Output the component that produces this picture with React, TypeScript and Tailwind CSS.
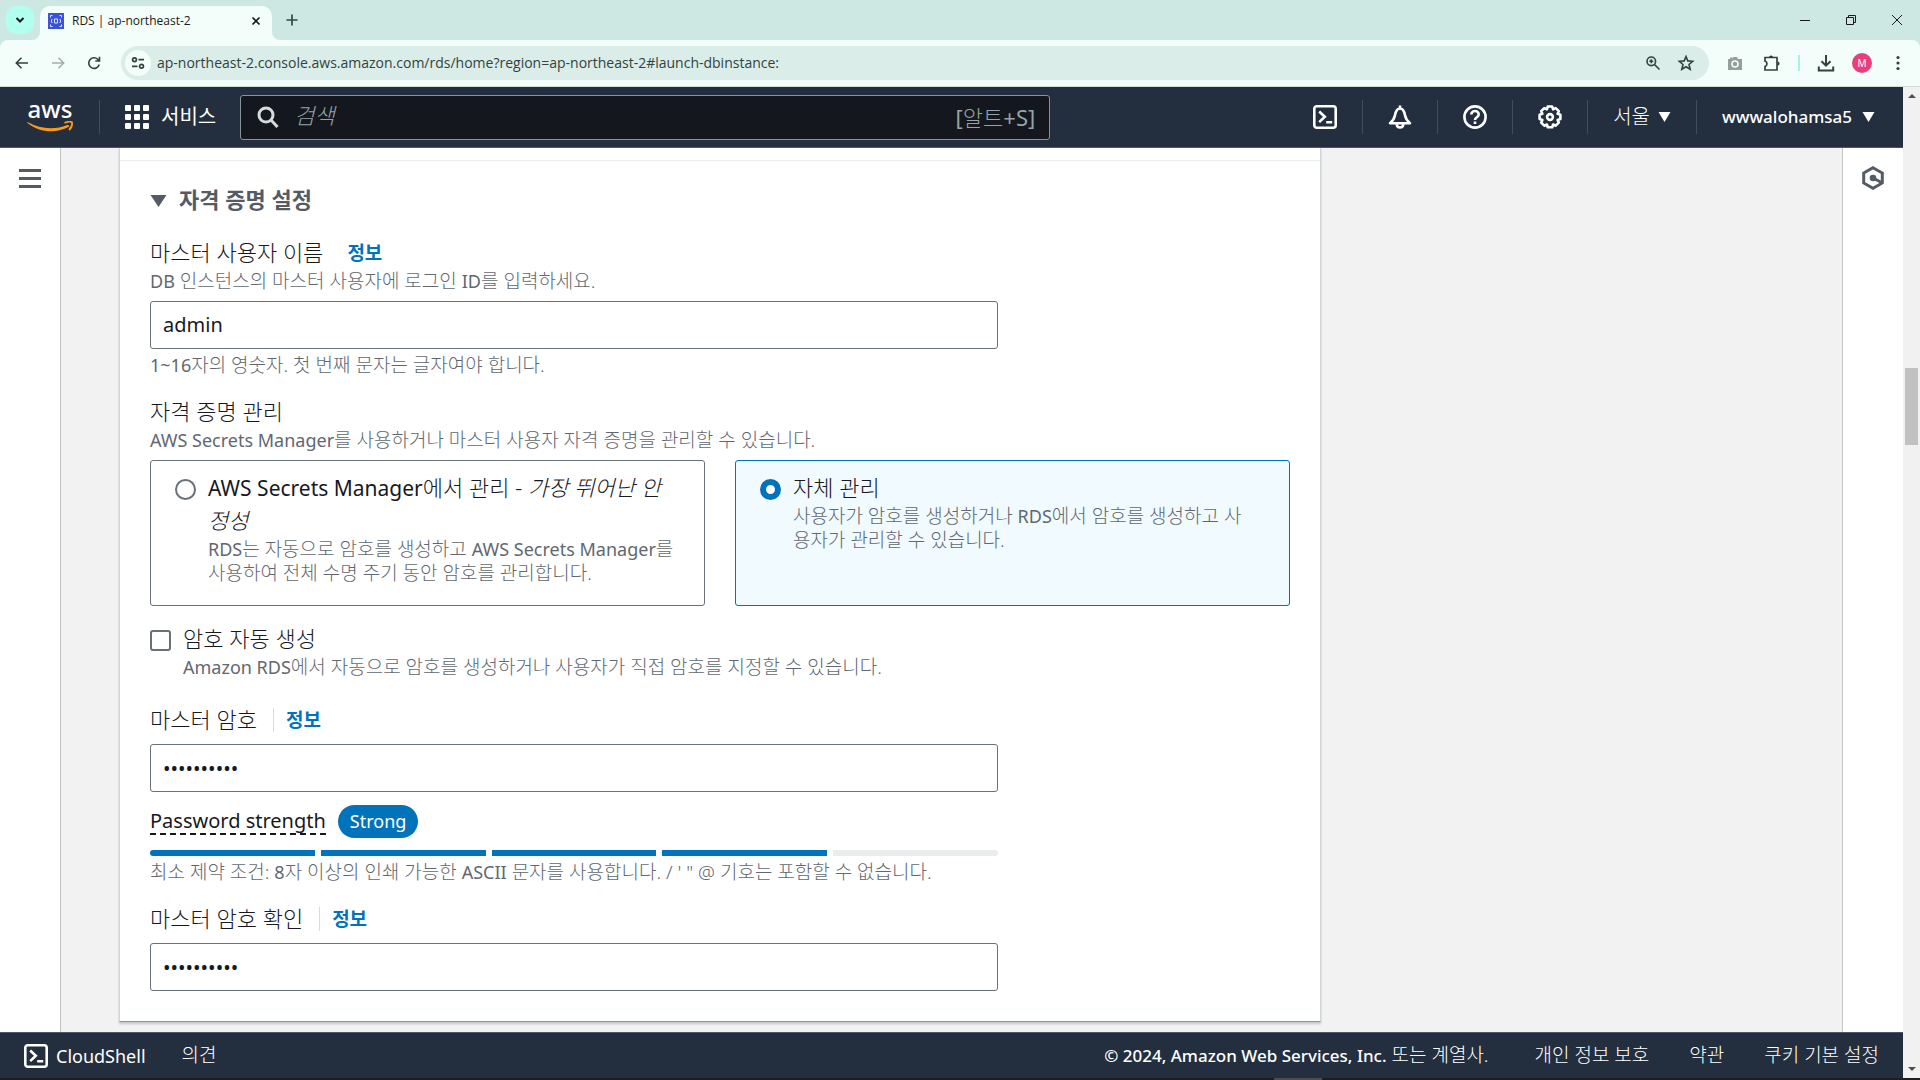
import React from "react";

const FONT = "font-['Noto_Sans','Noto_Sans_CJK_KR',sans-serif]";

function CloudShellIcon() {
  return (
    <svg className="size-6" viewBox="0 0 24 24" fill="none" stroke="currentColor" strokeWidth="2.6" aria-hidden="true">
      <rect x="1.3" y="1.3" width="21.4" height="21.4" rx="2.5" />
      <path d="M6.2 6.5l5.6 5.3-5.6 5.3M13.2 17.2h6" />
    </svg>
  );
}

function Caret() {
  return (
    <svg className="h-3 w-[13px]" viewBox="0 0 13 12" fill="currentColor" aria-hidden="true">
      <path d="M0.5 1h12L6.5 11z" />
    </svg>
  );
}

function TabStrip() {
  return (
    <div className="flex h-10 items-start bg-[#cde8e2] text-[#1b1b1b]">
      <button aria-label="탭 검색" className="mt-1.5 ml-1.5 grid size-7 place-items-center rounded-[10px] bg-[#b2fff0]">
        <svg className="size-3" viewBox="0 0 12 12" fill="none" stroke="currentColor" strokeWidth="2">
          <path d="M2.5 4l3.5 3.5L9.5 4" />
        </svg>
      </button>
      <div className="relative mt-1.5 ml-1.5 flex h-[34px] w-[232px] items-center rounded-t-[10px] bg-[#f3fdfa] pr-2 pb-1 pl-2">
        <svg className="absolute bottom-0 -left-2 size-2 text-[#f3fdfa]" viewBox="0 0 8 8" fill="currentColor" aria-hidden="true">
          <path d="M8 0v8H0a8 8 0 0 0 8-8z" />
        </svg>
        <svg className="absolute -right-2 bottom-0 size-2 text-[#f3fdfa]" viewBox="0 0 8 8" fill="currentColor" aria-hidden="true">
          <path d="M0 0v8h8a8 8 0 0 1-8-8z" />
        </svg>
        <svg className="size-4 shrink-0" viewBox="0 0 16 16" aria-hidden="true">
          <rect width="16" height="16" fill="#3b53d6" />
          <g fill="none" stroke="#dfe4ff" strokeWidth="1">
            <path d="M2.500 4.500v-2h2M11.500 2.500h2v2M13.500 11.500v2h-2M4.500 13.500h-2v-2" />
            <path d="M4.300 6C3 7.300 3 8.700 4.300 10M11.700 6c1.300 1.300 1.300 2.700 0 4" />
            <path d="M6.500 6h3v4h-3z" />
          </g>
        </svg>
        <span className="ml-2 flex-1 font-['Open_Sans',sans-serif] text-xs">RDS | ap-northeast-2</span>
        <button aria-label="탭 닫기" className="grid size-4 place-items-center">
          <svg className="size-2.5" viewBox="0 0 10 10" stroke="currentColor" strokeWidth="1.7">
            <path d="M1.500 1.500l7 7M8.500 1.500l-7 7" />
          </svg>
        </button>
      </div>
      <button aria-label="새 탭" className="mt-3 ml-3 grid size-4 place-items-center text-[#2f4a45]">
        <svg className="size-3" viewBox="0 0 12 12" stroke="currentColor" strokeWidth="1.700">
          <path d="M6 0.500v11M0.500 6h11" />
        </svg>
      </button>
      <div className="ml-auto flex h-10 items-center">
        <button aria-label="최소화" className="grid w-[46px] place-items-center">
          <svg className="h-3 w-2.5" viewBox="0 0 10 12" stroke="currentColor">
            <path d="M0 6.500h10" />
          </svg>
        </button>
        <button aria-label="이전 크기로 복원" className="grid w-[46px] place-items-center">
          <svg className="size-2.5" viewBox="0 0 10 10" fill="none" stroke="currentColor">
            <path d="M0.500 2.500h7v7h-7zM2.500 2.500v-2h7v7h-2" />
          </svg>
        </button>
        <button aria-label="닫기" className="grid w-[46px] place-items-center">
          <svg className="size-2.5" viewBox="0 0 10 10" stroke="currentColor">
            <path d="M0 0l10 10M10 0L0 10" />
          </svg>
        </button>
      </div>
    </div>
  );
}

function Toolbar() {
  return (
    <div className="bg-[#cde8e2]">
      <div className="flex h-[47px] items-center rounded-t-lg border-b border-[#cfdedb] bg-[#f3fdfa] text-[#31433f]">
        <div className="flex items-center gap-[18px] pl-[13px]">
          <button aria-label="뒤로">
            <svg className="size-[18px]" viewBox="0 0 18 18" fill="none" stroke="currentColor" strokeWidth="1.600">
              <path d="M15 9H3.500M8.500 3.800L3.300 9l5.200 5.200" />
            </svg>
          </button>
          <button aria-label="앞으로" className="text-[#a3b0ad]">
            <svg className="size-[18px]" viewBox="0 0 18 18" fill="none" stroke="currentColor" strokeWidth="1.600">
              <path d="M3 9h11.500M9.500 3.800L14.700 9l-5.200 5.200" />
            </svg>
          </button>
          <button aria-label="새로고침">
            <svg className="size-[18px]" viewBox="0 0 18 18" fill="none" stroke="currentColor" strokeWidth="1.600">
              <path d="M14.200 10.500A5.300 5.300 0 1 1 12.800 5.300L14.300 6.800M14.500 2.800V7H10.300" />
            </svg>
          </button>
        </div>
        <div className="ml-[18px] flex h-[34px] flex-1 items-center rounded-full bg-[#dbede8] pr-3.5 pl-1">
          <button aria-label="사이트 정보 보기" className="grid size-[26px] place-items-center rounded-full bg-[#f3fdfa]">
            <svg className="size-3.5" viewBox="0 0 14 14" fill="none" stroke="currentColor" strokeWidth="1.700">
              <circle cx="3.500" cy="3.700" r="1.900" />
              <circle cx="10.500" cy="10.300" r="1.900" />
              <path d="M7.500 3.700H13M1 10.300h5.500" />
            </svg>
          </button>
          <input
            aria-label="주소창"
            className="ml-1.5 min-w-0 flex-1 bg-transparent font-['Open_Sans',sans-serif] text-sm outline-none"
            defaultValue="ap-northeast-2.console.aws.amazon.com/rds/home?region=ap-northeast-2#launch-dbinstance:"
          />
          <button aria-label="확대/축소">
            <svg className="size-4" viewBox="0 0 16 16" fill="none" stroke="currentColor" strokeWidth="1.600">
              <circle cx="6.300" cy="6.300" r="4.300" />
              <path d="M9.500 9.500L14.500 14.500M6.300 4.300v4M4.300 6.300h4" />
            </svg>
          </button>
          <button aria-label="북마크에 추가" className="ml-4">
            <svg className="size-[18px]" viewBox="0 0 18 18" fill="none" stroke="currentColor" strokeWidth="1.600">
              <path d="M9 2.500l1.800 4.400 4.900.4-3.700 3.200 1.200 4.800L9 12.800l-4.200 2.500L6 10.500 2.300 7.300l4.900-.4z" />
            </svg>
          </button>
        </div>
        <div className="flex items-center pr-3 pl-[18px]">
          <button aria-label="화면 캡처" className="text-[#94a09e]">
            <svg className="size-4" viewBox="0 0 16 16" aria-hidden="true">
              <path fill="currentColor" d="M1 4h2V2.500h2V4l1-2h4l1 2h4v11H1z" />
              <circle cx="8" cy="9" r="3" fill="none" stroke="#f3fdfa" strokeWidth="1.600" />
            </svg>
          </button>
          <button aria-label="확장 프로그램" className="ml-5">
            <svg className="size-[18px]" viewBox="0 0 18 18" fill="none" stroke="currentColor" strokeWidth="1.700">
              <path d="M2 3.500h12v12.500H2V12.500c2.600-.8 2.600-4.700 0-5.500z" />
              <path fill="currentColor" stroke="none" d="M6 3.500a2.100 2.100 0 0 1 4.200 0zM14.500 7.500a2.100 2.100 0 0 1 0 4.200z" />
            </svg>
          </button>
          <span className="ml-[17px] h-4 w-0.5 bg-[#a5f2e6]" />
          <button aria-label="다운로드" className="ml-[17px]">
            <svg className="size-[18px]" viewBox="0 0 18 18" fill="none" stroke="currentColor" strokeWidth="2">
              <path d="M9 1v10.500M4.500 7.200L9 11.700l4.500-4.500M1.800 12.500V16.500h14.400v-4" />
            </svg>
          </button>
          <button aria-label="프로필" className="ml-[17px] grid size-5 place-items-center rounded-full bg-[#e93e7c] text-[10px] text-white">
            M
          </button>
          <button aria-label="Chrome 맞춤설정" className="ml-4">
            <svg className="size-5" viewBox="0 0 20 20" fill="currentColor">
              <circle cx="10" cy="4.500" r="1.600" />
              <circle cx="10" cy="10" r="1.600" />
              <circle cx="10" cy="15.500" r="1.600" />
            </svg>
          </button>
        </div>
      </div>
    </div>
  );
}

function HeaderRule() {
  return <span className="h-[34px] w-px shrink-0 bg-[#414d5c]" />;
}

function AwsHeader() {
  return (
    <header className="flex h-[61px] shrink-0 items-center border-b border-[#4b5563] bg-[#232f3e] text-white">
      <a href="#home" aria-label="AWS" className="ml-[26px] flex w-12 shrink-0 flex-col items-center">
        <span className="h-5 text-2xl leading-4 font-medium">aws</span>
        <svg className="h-3 w-12" viewBox="0 0 48 12" aria-hidden="true">
          <path d="M1 1.500C14 12.500 31 12.500 43.500 5.500l-1.500-1.800C29 9 15 8.500 1.500 1z" fill="#f79a1e" />
          <path d="M38.500 2c3-1.500 6-1.600 7.500-.7.400 2.500-.6 5.500-3 7.700" fill="none" stroke="#f79a1e" strokeWidth="1.800" />
        </svg>
      </a>
      <div className="ml-[25px] flex shrink-0 items-center gap-[25px]">
        <HeaderRule />
        <button className="flex items-center gap-3 text-xl">
          <svg className="size-6" viewBox="0 0 24 24" fill="currentColor" aria-hidden="true">
            <rect width="6" height="6" rx="1" />
            <rect x="9" width="6" height="6" rx="1" />
            <rect x="18" width="6" height="6" rx="1" />
            <rect y="9" width="6" height="6" rx="1" />
            <rect x="9" y="9" width="6" height="6" rx="1" />
            <rect x="18" y="9" width="6" height="6" rx="1" />
            <rect y="18" width="6" height="6" rx="1" />
            <rect x="9" y="18" width="6" height="6" rx="1" />
            <rect x="18" y="18" width="6" height="6" rx="1" />
          </svg>
          서비스
        </button>
      </div>
      <div className="ml-6 flex h-[45px] w-full max-w-[810px] items-center rounded-[3px] border border-[#879596] bg-[#14171d] pr-3.5 pl-4">
        <svg className="size-[22px] shrink-0 text-[#d5dbdb]" viewBox="0 0 22 22" fill="none" stroke="currentColor" strokeWidth="3" aria-hidden="true">
          <circle cx="9" cy="9" r="7" />
          <path d="M14 14l6.500 7" />
        </svg>
        <input aria-label="검색" placeholder="검색" className="ml-[15px] min-w-0 flex-1 bg-transparent pb-[3px] text-[22px] font-light italic outline-none placeholder:text-[#95a5a6]" />
        <span className="text-[22px] text-[#95a5a6]">[<span className="font-light">알트</span>+S]</span>
      </div>
      <nav className="ml-auto flex shrink-0 items-center gap-[25px] pr-7">
        <button aria-label="CloudShell"><CloudShellIcon /></button>
        <HeaderRule />
        <button aria-label="알림">
          <svg className="size-6" viewBox="0 0 24 24" fill="none" stroke="currentColor" strokeWidth="2.600" aria-hidden="true">
            <path strokeLinejoin="round" d="M2 18.200h20c-3-2.500-4.300-4.500-5-8-.7-3.800-2-6.700-5-6.700s-4.300 2.900-5 6.700c-.7 3.500-2 5.500-5 8zM12 0.500v3M8.800 18.500v.8c0 4.200 6.400 4.200 6.400 0v-.8" />
          </svg>
        </button>
        <HeaderRule />
        <button aria-label="도움말">
          <svg className="size-6" viewBox="0 0 24 24" fill="none" stroke="currentColor" strokeWidth="2.600" aria-hidden="true">
            <circle cx="12" cy="12" r="10.600" />
            <path d="M8.300 9.600c0-4.800 7.400-4.800 7.400 0 0 2.800-3.700 2.600-3.700 5.400M12 16.500v2.600" />
          </svg>
        </button>
        <HeaderRule />
        <button aria-label="설정">
          <svg className="size-6" viewBox="0 0 24 24" fill="none" stroke="currentColor" strokeWidth="2.600" aria-hidden="true">
            <path strokeLinejoin="round" d="M9.800 1.500h4.400l.9 2.800 2.600-1.200 3.100 3.100-1.200 2.600 2.800.9v4.400l-2.800.9 1.200 2.600-3.100 3.100-2.600-1.200-.9 2.800H9.800l-.9-2.800-2.600 1.200-3.100-3.100 1.200-2.600-2.800-.9V9.700l2.800-.9-1.200-2.600 3.100-3.100 2.600 1.200z" />
            <circle cx="12" cy="12" r="2.900" />
          </svg>
        </button>
        <HeaderRule />
        <button className="flex items-center gap-2 text-xl font-light">서울 <Caret /></button>
        <HeaderRule />
        <button className="flex items-center gap-2.5 text-[17px] font-medium">wwwalohamsa5 <Caret /></button>
      </nav>
    </header>
  );
}

function InfoLink() {
  return <a href="#info" className="text-[19px] leading-6 font-bold text-[#0073bb]">정보</a>;
}

/* Hangul is set light and slightly larger than the Latin words beside it. */
function Mixed({ text, latin }: { text: string; latin: string }) {
  return (
    <>
      {text.split(/([A-Za-z0-9~]+(?: [A-Za-z0-9]+)*)/).map((run, i) =>
        i % 2 ? <span key={i} className={latin}>{run}</span> : run
      )}
    </>
  );
}

function Hint({ text }: { text: string }) {
  return (
    <span className="block text-[19px] leading-6 font-light text-[#5f6870]">
      <Mixed text={text} latin="text-lg leading-none font-normal" />
    </span>
  );
}

const LABEL = "text-[22px] leading-[33px] font-light text-[#16191f]";
const FIELD = "mt-2 h-12 w-full max-w-[848px] rounded-[3px] border border-[#687078] bg-white px-3 text-xl text-[#16191f] outline-none";

function CredentialsPanel() {
  return (
    <section className="w-full max-w-[1202px] border-x border-b border-x-[#cfd4d4] border-b-[#8e9494] bg-white shadow-[0_2px_2px_rgba(0,28,36,0.2)]">
      <div className="h-[13px] border-b border-[#eaeded]" />
      <div className="px-[30px] pt-[22px] pb-[30px]">
        <button aria-expanded="true" className="flex items-center gap-3 text-[22px] leading-[33px] font-bold text-[#545b64]">
          <svg className="mt-0.5 h-3 w-[17px]" viewBox="0 0 17 12" fill="currentColor" aria-hidden="true"><path d="M0.500 0h16L8.500 12z" /></svg>
          자격 증명 설정
        </button>

        <div className="mt-5 flex items-center gap-6">
          <label htmlFor="master-user" className={LABEL}>마스터 사용자 이름</label>
          <InfoLink />
        </div>
        <Hint text="DB 인스턴스의 마스터 사용자에 로그인 ID를 입력하세요." />
        <input id="master-user" className={FIELD + " pb-0.5"} defaultValue="admin" />
        <div className="mt-1"><Hint text="1~16자의 영숫자. 첫 번째 문자는 글자여야 합니다." /></div>

        <fieldset className="mt-[18px]">
          <legend className={LABEL}>자격 증명 관리</legend>
          <Hint text="AWS Secrets Manager를 사용하거나 마스터 사용자 자격 증명을 관리할 수 있습니다." />
          <div className="mt-2 grid grid-cols-2 gap-[30px]">
            <label className="flex items-start gap-3 rounded-[3px] border border-[#687078] pt-2.5 pr-7 pb-5 pl-6">
              <input type="radio" name="management" className="mt-2 size-[21px] shrink-0 appearance-none rounded-full border-2 border-[#687078] bg-white" />
              <span>
                <span className={"block " + LABEL}><span className="text-[21px] leading-none font-normal">AWS Secrets Manager</span>에서 관리 - <i>가장 뛰어난 안정성</i></span>
                <Hint text="RDS는 자동으로 암호를 생성하고 AWS Secrets Manager를 사용하여 전체 수명 주기 동안 암호를 관리합니다." />
              </span>
            </label>
            <label className="flex items-start gap-3 rounded-[3px] border border-[#0073bb] bg-[#f1faff] pt-2.5 pr-10 pb-5 pl-6">
              <input type="radio" name="management" defaultChecked className="mt-2 size-[21px] shrink-0 appearance-none rounded-full border-[6px] border-[#0073bb] bg-white" />
              <span>
                <span className={"block " + LABEL}>자체 관리</span>
                <Hint text="사용자가 암호를 생성하거나 RDS에서 암호를 생성하고 사용자가 관리할 수 있습니다." />
              </span>
            </label>
          </div>
        </fieldset>

        <label className="mt-4 flex items-start gap-3">
          <input type="checkbox" className="mt-2 size-[21px] shrink-0 appearance-none rounded-[3px] border-2 border-[#687078] bg-white" />
          <span>
            <span className={"block " + LABEL}>암호 자동 생성</span>
            <Hint text="Amazon RDS에서 자동으로 암호를 생성하거나 사용자가 직접 암호를 지정할 수 있습니다." />
          </span>
        </label>

        <div className="mt-6 flex items-center gap-3">
          <label htmlFor="master-password" className={LABEL}>마스터 암호</label>
          <span className="ml-1 h-6 w-px bg-[#d5dbdb]" />
          <InfoLink />
        </div>
        <input id="master-password" type="password" className={FIELD} defaultValue="password12" />
        <div className="mt-[13px] flex items-center gap-3">
          <span className="border-b-2 border-dashed border-[#16191f] text-xl leading-6 text-[#16191f]">Password strength</span>
          <span className="rounded-full bg-[#0073bb] px-3 text-lg leading-[33px] text-white">Strong</span>
        </div>
        <div className="mt-3 grid max-w-[848px] grid-cols-5 gap-1.5">
          <span className="h-1.5 rounded-l-full bg-[#0073bb]" />
          <span className="h-1.5 bg-[#0073bb]" />
          <span className="h-1.5 bg-[#0073bb]" />
          <span className="h-1.5 bg-[#0073bb]" />
          <span className="h-1.5 rounded-r-full bg-[#eaeded]" />
        </div>
        <div className="mt-1"><Hint text={"최소 제약 조건: 8자 이상의 인쇄 가능한 ASCII 문자를 사용합니다. / ' \" @ 기호는 포함할 수 없습니다."} /></div>

        <div className="mt-[18px] flex items-center gap-3">
          <label htmlFor="confirm-password" className={LABEL}>마스터 암호 확인</label>
          <span className="ml-1 h-6 w-px bg-[#d5dbdb]" />
          <InfoLink />
        </div>
        <input id="confirm-password" type="password" className={FIELD} defaultValue="password12" />
      </div>
    </section>
  );
}

function Footer() {
  return (
    <footer className="flex h-[46px] shrink-0 items-center border-t border-[#4b5563] bg-[#232f3e] px-6 text-[19px] font-light text-white">
      <button className="flex items-center gap-2 text-lg font-normal"><CloudShellIcon />CloudShell</button>
      <a href="#feedback" className="ml-9">의견</a>
      <p className="ml-auto"><span className="text-[17px] font-medium">© 2024, Amazon Web Services, Inc.</span> 또는 계열사.</p>
      <a href="#privacy" className="ml-[46px]">개인 정보 보호</a>
      <a href="#terms" className="ml-10">약관</a>
      <a href="#cookies" className="ml-10">쿠키 기본 설정</a>
    </footer>
  );
}

export default function App() {
  return (
    <div className={"flex h-screen flex-col overflow-hidden " + FONT}>
      <TabStrip />
      <Toolbar />
      <div className="flex min-h-0 flex-1">
        <div className="flex min-w-0 flex-1 flex-col">
          <AwsHeader />
          <div className="flex min-h-0 flex-1">
            <aside className="w-[61px] shrink-0 border-r border-[#bfc4c4] bg-white pt-[21px] pl-[19px] text-[#545b64]">
              <button aria-label="탐색 메뉴 열기">
                <svg className="h-[19px] w-[22px]" viewBox="0 0 22 19" fill="currentColor" aria-hidden="true">
                  <path d="M0 0h22v3H0zM0 8h22v3H0zM0 16h22v3H0z" />
                </svg>
              </button>
            </aside>
            <main className="min-w-0 flex-1 overflow-hidden bg-[#f2f2f2] px-[58px]">
              <CredentialsPanel />
            </main>
            <aside className="w-[61px] shrink-0 border-l border-[#bfc4c4] bg-white pt-[18px] pl-[19px] text-[#545b64]">
              <button aria-label="도구 열기">
                <svg className="h-6 w-[22px]" viewBox="0 0 22 24" fill="none" stroke="currentColor" strokeWidth="3" aria-hidden="true">
                  <path d="M11 1.700l9.300 5.300v10L11 22.300 1.700 17V7z" />
                  <circle cx="11" cy="12" r="3.300" fill="currentColor" stroke="none" />
                  <path d="M11 12l8.500 4.500" />
                </svg>
              </button>
            </aside>
          </div>
          <Footer />
        </div>
        <div className="flex w-[17px] shrink-0 flex-col items-center bg-[#f1f1f1] text-[#505050]">
          <svg className="mt-1.5 h-1.5 w-2" viewBox="0 0 8 6" fill="currentColor" aria-hidden="true"><path d="M4 1l4 4H0z" /></svg>
          <div className="mt-[269px] h-[77px] w-[13px] bg-[#c1c1c1]" />
          <svg className="mt-auto mb-1.5 h-1.5 w-2" viewBox="0 0 8 6" fill="currentColor" aria-hidden="true"><path d="M4 5L0 1h8z" /></svg>
        </div>
      </div>
      <div className="flex h-0.5 shrink-0 justify-center bg-[#1c1f22]">
        <span className="ml-[676px] h-full w-12 bg-[#4a4d50]" />
      </div>
    </div>
  );
}
